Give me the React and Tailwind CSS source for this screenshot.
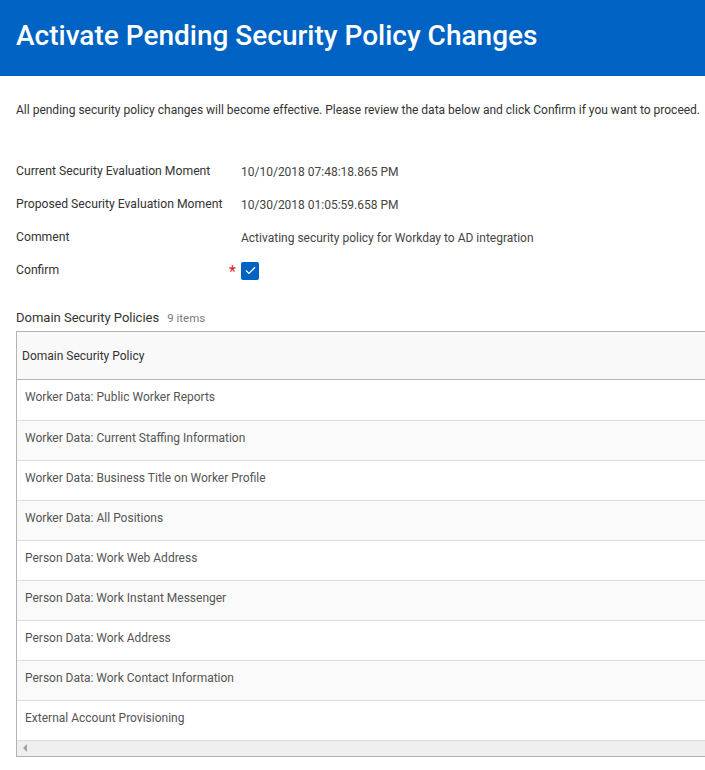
import React from 'react';

const fields = [
  ['Current Security Evaluation Moment', '10/10/2018 07:48:18.865 PM'],
  ['Proposed Security Evaluation Moment', '10/30/2018 01:05:59.658 PM'],
  ['Comment', 'Activating security policy for Workday to AD integration'],
];

const policies = [
  'Worker Data: Public Worker Reports',
  'Worker Data: Current Staffing Information',
  'Worker Data: Business Title on Worker Profile',
  'Worker Data: All Positions',
  'Person Data: Work Web Address',
  'Person Data: Work Instant Messenger',
  'Person Data: Work Address',
  'Person Data: Work Contact Information',
  'External Account Provisioning',
];

export default function App() {
  return (
    <div className="w-[705px] h-[770px] overflow-hidden bg-white font-['Roboto',sans-serif] text-[#333]">
      <div className="h-[76px] bg-[#0063c3] flex items-center px-4">
        <h1 className="text-white text-[28px] font-medium pb-1">
          Activate Pending Security Policy Changes
        </h1>
      </div>

      <p className="mt-[25px] px-4 text-[12px] text-[#333] whitespace-nowrap">
        All pending security policy changes will become effective. Please review the data below and click Confirm if you want to proceed.
      </p>

      <div className="mt-[36px] px-4 flex flex-col">
        {fields.map(([label, value]) => (
          <div key={label} className="flex items-center h-[33px]">
            <div className="w-[225px] text-[12.2px] text-[#333]">{label}</div>
            <div className="text-[12px] text-[#444]">{value}</div>
          </div>
        ))}
        <div className="flex items-center h-[33px]">
          <div className="w-[213px] text-[12.2px] text-[#333]">Confirm</div>
          <span className="w-[12px] text-[#e0231c] text-[16px] leading-none pt-[2px]">*</span>
          <span className="w-[18px] h-[18px] rounded-[2px] bg-[#0063c3] flex items-center justify-center">
            <svg width="11" height="9" viewBox="0 0 11 9" fill="none">
              <path d="M1 4.6 L4 7.4 L10 1.2" stroke="white" strokeWidth="1.3" />
            </svg>
          </span>
        </div>
      </div>

      <div className="mt-[21px] px-4 flex items-baseline gap-2">
        <span className="text-[13px] text-[#333]">Domain Security Policies</span>
        <span className="text-[11.5px] text-[#7b7b7b]">9 items</span>
      </div>

      <div className="mt-[3px] ml-4 w-[800px] border border-[#b3b3b3]">
        <div className="h-[48px] bg-[#f9f9f9] border-b border-[#b3b3b3] flex items-center px-[5px] pt-[2px] text-[12px] text-[#333]">
          Domain Security Policy
        </div>
        {policies.map((p, i) => (
          <div
            key={p}
            className={`h-[40px] px-[8px] pt-[9px] leading-[16px] text-[12px] text-[#555] ${i > 0 ? 'border-t border-[#dcdcdc]' : ''} ${i % 2 === 1 ? 'bg-[#fafafa]' : 'bg-white'}`}
          >
            {p}
          </div>
        ))}
        <div className="h-[16px] bg-[#efefef] border-t border-[#dcdcdc] flex items-center px-[6px]">
          <svg width="5" height="8" viewBox="0 0 5 8">
            <path d="M4 0 L0 4 L4 8 Z" fill="#a3a3a3" />
          </svg>
        </div>
      </div>
    </div>
  );
}
